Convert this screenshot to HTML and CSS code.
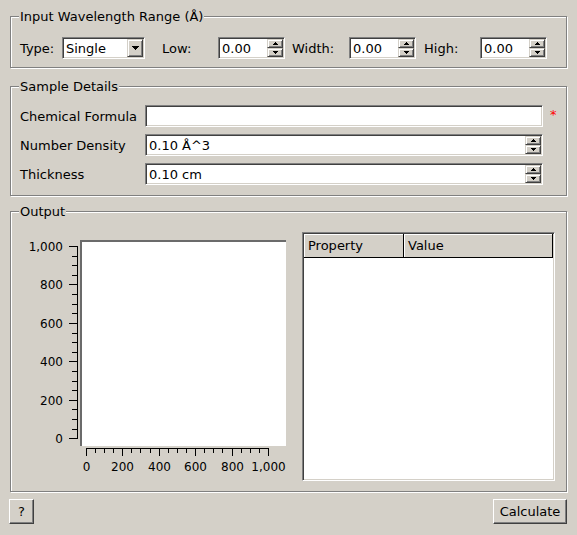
FILE: index.html
```html
<!DOCTYPE html>
<html>
<head>
<meta charset="utf-8">
<link rel="stylesheet" href="styles.css">
</head>
<body>
<div class="window">
  <fieldset class="group g1">
    <legend>Input Wavelength Range (Å)</legend>
    <div class="range-row">
      <span class="lbl l-type">Type:</span>
      <div class="combo"><span class="val">Single</span><span class="drop"><span class="arrow-down-lg"></span></span></div>
      <span class="lbl l-low">Low:</span>
      <div class="spin small"><span class="val">0.00</span><span class="btns"><span class="sb"><span class="up"></span></span><span class="sb"><span class="down"></span></span></span></div>
      <span class="lbl l-width">Width:</span>
      <div class="spin small"><span class="val">0.00</span><span class="btns"><span class="sb"><span class="up"></span></span><span class="sb"><span class="down"></span></span></span></div>
      <span class="lbl l-high">High:</span>
      <div class="spin small"><span class="val">0.00</span><span class="btns"><span class="sb"><span class="up"></span></span><span class="sb"><span class="down"></span></span></span></div>
    </div>
  </fieldset>

  <fieldset class="group g2">
    <legend>Sample Details</legend>
    <div class="form">
      <span class="lbl">Chemical Formula</span>
      <div class="edit"></div>
      <span class="req">*</span>

      <span class="lbl">Number Density</span>
      <div class="spin"><span class="val">0.10 Å^3</span><span class="btns"><span class="sb"><span class="up"></span></span><span class="sb"><span class="down"></span></span></span></div>
      <span></span>

      <span class="lbl">Thickness</span>
      <div class="spin"><span class="val">0.10 cm</span><span class="btns"><span class="sb"><span class="up"></span></span><span class="sb"><span class="down"></span></span></span></div>
      <span></span>
    </div>
  </fieldset>

  <fieldset class="group g3">
    <legend>Output</legend>
    <div class="output">
      <svg class="plot" width="279" height="249" viewBox="0 0 279 249">
        <rect x="69" y="8" width="206" height="206" fill="#fff"/>
        <rect x="69" y="8" width="206" height="2" fill="#6b6b6b"/>
        <rect x="69" y="8" width="2" height="206" fill="#6b6b6b"/>
        <g stroke="#000" stroke-width="1" shape-rendering="crispEdges">
          <line x1="66.5" y1="14" x2="66.5" y2="207"/>
          <line x1="58" y1="14.5" x2="67" y2="14.5"/>
          <line x1="58" y1="52.5" x2="67" y2="52.5"/>
          <line x1="58" y1="91.5" x2="67" y2="91.5"/>
          <line x1="58" y1="129.5" x2="67" y2="129.5"/>
          <line x1="58" y1="168.5" x2="67" y2="168.5"/>
          <line x1="58" y1="206.5" x2="67" y2="206.5"/>
          <line x1="61" y1="24.5" x2="67" y2="24.5"/>
          <line x1="61" y1="33.5" x2="67" y2="33.5"/>
          <line x1="61" y1="43.5" x2="67" y2="43.5"/>
          <line x1="61" y1="62.5" x2="67" y2="62.5"/>
          <line x1="61" y1="72.5" x2="67" y2="72.5"/>
          <line x1="61" y1="81.5" x2="67" y2="81.5"/>
          <line x1="61" y1="101.5" x2="67" y2="101.5"/>
          <line x1="61" y1="110.5" x2="67" y2="110.5"/>
          <line x1="61" y1="120.5" x2="67" y2="120.5"/>
          <line x1="61" y1="139.5" x2="67" y2="139.5"/>
          <line x1="61" y1="149.5" x2="67" y2="149.5"/>
          <line x1="61" y1="158.5" x2="67" y2="158.5"/>
          <line x1="61" y1="177.5" x2="67" y2="177.5"/>
          <line x1="61" y1="187.5" x2="67" y2="187.5"/>
          <line x1="61" y1="197.5" x2="67" y2="197.5"/>

          <line x1="75" y1="216.5" x2="258" y2="216.5"/>
          <line x1="75.5" y1="216" x2="75.5" y2="224"/>
          <line x1="111.5" y1="216" x2="111.5" y2="224"/>
          <line x1="148.5" y1="216" x2="148.5" y2="224"/>
          <line x1="184.5" y1="216" x2="184.5" y2="224"/>
          <line x1="221.5" y1="216" x2="221.5" y2="224"/>
          <line x1="257.5" y1="216" x2="257.5" y2="224"/>
          <line x1="84.5" y1="216" x2="84.5" y2="221"/>
          <line x1="93.5" y1="216" x2="93.5" y2="221"/>
          <line x1="102.5" y1="216" x2="102.5" y2="221"/>
          <line x1="120.5" y1="216" x2="120.5" y2="221"/>
          <line x1="129.5" y1="216" x2="129.5" y2="221"/>
          <line x1="139.5" y1="216" x2="139.5" y2="221"/>
          <line x1="157.5" y1="216" x2="157.5" y2="221"/>
          <line x1="166.5" y1="216" x2="166.5" y2="221"/>
          <line x1="175.5" y1="216" x2="175.5" y2="221"/>
          <line x1="193.5" y1="216" x2="193.5" y2="221"/>
          <line x1="202.5" y1="216" x2="202.5" y2="221"/>
          <line x1="211.5" y1="216" x2="211.5" y2="221"/>
          <line x1="230.5" y1="216" x2="230.5" y2="221"/>
          <line x1="239.5" y1="216" x2="239.5" y2="221"/>
          <line x1="248.5" y1="216" x2="248.5" y2="221"/>
        </g>
        <g class="ticklbl" text-anchor="end">
          <text x="52" y="19">1,000</text>
          <text x="52" y="57">800</text>
          <text x="52" y="96">600</text>
          <text x="52" y="134">400</text>
          <text x="52" y="173">200</text>
          <text x="52" y="211">0</text>
        </g>
        <g class="ticklbl" text-anchor="middle">
          <text x="75.5" y="239">0</text>
          <text x="111.5" y="239">200</text>
          <text x="148.5" y="239">400</text>
          <text x="184.5" y="239">600</text>
          <text x="221.5" y="239">800</text>
          <text x="257.5" y="239">1,000</text>
        </g>
      </svg>
      <div class="table">
        <div class="thead">
          <div class="th c1">Property</div>
          <div class="th c2">Value</div>
        </div>
        <div class="tbody"></div>
      </div>
    </div>
  </fieldset>

  <div class="actions">
    <button class="btn help">?</button>
    <button class="btn calc">Calculate</button>
  </div>
</div>
</body>
</html>
```

FILE: styles.css
```css
html, body {
  margin: 0;
  padding: 0;
}
body {
  width: 577px;
  height: 535px;
  overflow: hidden;
  background: #d4d0c8;
  color: #000;
  font-family: "DejaVu Sans", sans-serif;
  font-size: 13px;
}
.window {
  padding: 9px 10px 0 10px;
  display: flex;
  flex-direction: column;
}

/* group boxes */
.group {
  margin: 0;
  min-width: 0;
  border: 1px solid #808080;
  box-shadow: inset 1px 1px 0 #fff, 1px 1px 0 #fff;
  padding: 13px 9px 8px 9px;
}
.group legend {
  padding: 0 1px;
  margin-left: -1px;
  line-height: 15px;
  background: #d4d0c8;
}
.g2 {
  margin-top: 11px;
  padding-top: 11px;
  padding-bottom: 10px;
}
.g3 {
  margin-top: 8px;
  padding: 13px 10px 10px 9px;
}

/* row 1 */
.range-row {
  display: flex;
  align-items: center;
  height: 22px;
}
.lbl {
  line-height: 15px;
  white-space: nowrap;
}
.l-type { width: 42px; }
.l-low { width: 56px; margin-left: 17px; }
.l-width { width: 57px; margin-left: 7px; }
.l-high { width: 56px; margin-left: 8px; }

/* sunken fields */
.spin, .combo, .edit {
  box-sizing: border-box;
  height: 22px;
  background: #fff;
  border: 1px solid;
  border-color: #808080 #fff #fff #808080;
  box-shadow: inset 1px 1px 0 #404040, inset -1px -1px 0 #d4d0c8;
  padding: 1px;
  display: flex;
  align-items: center;
}
.spin.small { width: 67px; }
.combo { width: 83px; }
.val {
  flex: 1;
  padding-left: 2px;
  line-height: 15px;
  white-space: nowrap;
  overflow: hidden;
}
.btns {
  display: flex;
  flex-direction: column;
  width: 16px;
  height: 18px;
}
.sb, .drop {
  box-sizing: border-box;
  background: #d4d0c8;
  border: 1px solid;
  border-color: #d4d0c8 #404040 #404040 #d4d0c8;
  box-shadow: inset 1px 1px 0 #fff, inset -1px -1px 0 #808080;
  display: flex;
  align-items: center;
  justify-content: center;
}
.sb { height: 9px; }
.drop { width: 16px; height: 18px; }

/* pixel arrows */
.up, .down, .arrow-down-lg {
  position: relative;
  width: 5px;
  height: 3px;
}
.up::before, .down::before, .arrow-down-lg::before {
  content: "";
  position: absolute;
  width: 1px;
  height: 1px;
  background: #000;
}
.up::before {
  left: 2px; top: 0;
  box-shadow: -1px 1px 0 #000, 0 1px 0 #000, 1px 1px 0 #000,
              -2px 2px 0 #000, -1px 2px 0 #000, 0 2px 0 #000, 1px 2px 0 #000, 2px 2px 0 #000;
}
.down::before {
  left: 2px; top: 0;
  box-shadow: -2px 0 0 #000, -1px 0 0 #000, 1px 0 0 #000, 2px 0 0 #000,
              -1px 1px 0 #000, 0 1px 0 #000, 1px 1px 0 #000,
              0 2px 0 #000;
}
.arrow-down-lg {
  width: 7px;
  height: 4px;
}
.arrow-down-lg::before {
  left: 3px; top: 0;
  box-shadow: -3px 0 0 #000, -2px 0 0 #000, -1px 0 0 #000, 1px 0 0 #000, 2px 0 0 #000, 3px 0 0 #000,
              -2px 1px 0 #000, -1px 1px 0 #000, 0 1px 0 #000, 1px 1px 0 #000, 2px 1px 0 #000,
              -1px 2px 0 #000, 0 2px 0 #000, 1px 2px 0 #000,
              0 3px 0 #000;
}

/* sample form */
.form {
  display: grid;
  grid-template-columns: 125px 398px auto;
  row-gap: 7px;
  align-items: center;
}
.req {
  color: #ff0000;
  margin-left: 7px;
  line-height: 15px;
  margin-top: -3px;
}

/* output */
.output {
  display: flex;
  align-items: flex-start;
  height: 249px;
}
.plot {
  display: block;
  flex: none;
  margin-left: -9px;
}
.ticklbl {
  font-family: "DejaVu Sans", sans-serif;
  font-size: 12px;
  fill: #000;
}
.table {
  box-sizing: border-box;
  margin-left: 12px;
  width: 253px;
  height: 249px;
  background: #fff;
  border: 1px solid;
  border-color: #808080 #fff #fff #808080;
  box-shadow: inset 1px 1px 0 #404040, inset -1px -1px 0 #d4d0c8;
  padding: 1px;
  display: flex;
  flex-direction: column;
}
.thead {
  display: flex;
  height: 24px;
  flex: none;
}
.th {
  box-sizing: border-box;
  height: 24px;
  background: #d4d0c8;
  border-right: 1px solid #000;
  border-bottom: 1px solid #000;
  box-shadow: inset 1px 1px 0 #fff;
  padding-left: 4px;
  line-height: 23px;
}
.c1 { width: 100px; }
.c2 { flex: 1; }
.tbody { flex: 1; }

/* buttons */
.actions {
  display: flex;
  justify-content: space-between;
  margin-top: 7px;
  margin-left: -1px;
}
.btn {
  box-sizing: border-box;
  height: 25px;
  margin: 0;
  padding: 0;
  font-family: "DejaVu Sans", sans-serif;
  font-size: 13px;
  color: #000;
  background: #d4d0c8;
  border: 1px solid;
  border-color: #fff #404040 #404040 #fff;
  box-shadow: inset -1px -1px 0 #808080;
  border-radius: 0;
}
.help { width: 25px; }
.calc { width: 74px; }
```
